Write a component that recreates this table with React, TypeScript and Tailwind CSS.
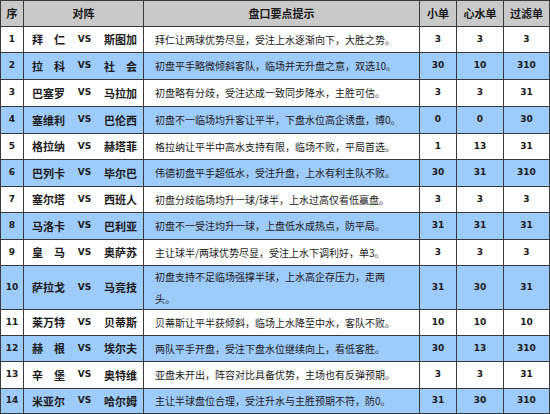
// Match tips table
type Row = {
  no: number;
  home: string;
  away: string;
  tip: string;
  small: string;
  heart: string;
  filter: string;
};

const rows: Row[] = [
  { no: 1, home: "拜　仁", away: "斯图加", tip: "拜仁让两球优势尽显，受注上水逐渐向下，大胜之势。", small: "3", heart: "3", filter: "3" },
  { no: 2, home: "拉　科", away: "社　会", tip: "初盘平手略微倾斜客队，临场并无升盘之意，双选10。", small: "30", heart: "10", filter: "310" },
  { no: 3, home: "巴塞罗", away: "马拉加", tip: "初盘略有分歧，受注达成一致同步降水，主胜可信。", small: "3", heart: "3", filter: "31" },
  { no: 4, home: "塞维利", away: "巴伦西", tip: "初盘不一临场均升客让平半，下盘水位高企诱盘，博0。", small: "0", heart: "0", filter: "30" },
  { no: 5, home: "格拉纳", away: "赫塔菲", tip: "格拉纳让平半中高水支持有限，临场不败，平局首选。", small: "1", heart: "13", filter: "31" },
  { no: 6, home: "巴列卡", away: "毕尔巴", tip: "伟德初盘平手超低水，受注升盘，上水有利主队不败。", small: "30", heart: "31", filter: "310" },
  { no: 7, home: "塞尔塔", away: "西班人", tip: "初盘分歧临场均升一球/球半，上水过高仅看低赢盘。", small: "3", heart: "3", filter: "3" },
  { no: 8, home: "马洛卡", away: "巴利亚", tip: "初盘不一受注均升一球，上盘低水成热点，防平局。", small: "31", heart: "31", filter: "31" },
  { no: 9, home: "皇　马", away: "奥萨苏", tip: "主让球半/两球优势尽显，受注上水下调利好，单3。", small: "3", heart: "3", filter: "3" },
  { no: 10, home: "萨拉戈", away: "马竞技", tip: "初盘支持不足临场强撑半球，上水高企存压力，走两\n头。", small: "31", heart: "30", filter: "31" },
  { no: 11, home: "莱万特", away: "贝蒂斯", tip: "贝蒂斯让平半获倾斜，临场上水降至中水，客队不败。", small: "10", heart: "10", filter: "10" },
  { no: 12, home: "赫　根", away: "埃尔夫", tip: "两队平手开盘，受注下盘水位继续向上，看低客胜。", small: "30", heart: "13", filter: "310" },
  { no: 13, home: "辛　堡", away: "奥特维", tip: "亚盘未开出，阵容对比具备优势，主场也有反弹预期。", small: "3", heart: "3", filter: "31" },
  { no: 14, home: "米亚尔", away: "哈尔姆", tip: "主让半球盘位合理，受注升水与主胜预期不符，防0。", small: "31", heart: "30", filter: "310" },
];

const cjk = "font-['Noto_Sans_CJK_SC',sans-serif]";
const num = "font-['DejaVu_Sans','Noto_Sans_CJK_SC',sans-serif] font-bold text-[9px]";

export default function App() {
  return (
    <div className="w-[550px] h-[414px] bg-[#3a3a3a] p-px text-[#1a1a1a]">
      <div className="grid h-full grid-cols-[22px_119px_275px_36px_46px_45px] grid-rows-[25px_25px_26px_26px_26px_25px_26px_25px_26px_25px_43px_25px_25px_26px_24px] gap-px">
        {/* header */}
        <div className={`bg-[#c9c9c9] flex items-center justify-center font-bold text-[11px] ${cjk}`}>序</div>
        <div className={`bg-[#c9c9c9] flex items-center justify-center font-bold text-[11px] ${cjk}`}>对阵</div>
        <div className={`bg-[#c9c9c9] flex items-center justify-center font-bold text-[11px] ${cjk}`}>盘口要点提示</div>
        <div className={`bg-[#c9c9c9] flex items-center justify-center font-bold text-[11px] ${cjk}`}>小单</div>
        <div className={`bg-[#c9c9c9] flex items-center justify-center font-bold text-[11px] ${cjk}`}>心水单</div>
        <div className={`bg-[#c9c9c9] flex items-center justify-center font-bold text-[11px] ${cjk}`}>过滤单</div>

        {rows.map((r) => {
          const bg = r.no % 2 === 0 ? "bg-[#9dcbfa]" : "bg-white";
          return (
            <div key={r.no} className="contents">
              <div className={`${bg} flex items-center justify-center ${num}`}>{r.no}</div>
              <div className={`${bg} flex items-center justify-between pl-[8px] pr-[6px] font-bold text-[11px] ${cjk}`}>
                <span>{r.home}</span>
                <span className="font-['DejaVu_Sans',sans-serif] text-[9px]">VS</span>
                <span>{r.away}</span>
              </div>
              <div className={`${bg} flex items-center pl-[11px] text-[10px] leading-[22px] whitespace-pre-line ${cjk}`}>{r.tip}</div>
              <div className={`${bg} flex items-center justify-center ${num}`}>{r.small}</div>
              <div className={`${bg} flex items-center justify-center ${num}`}>{r.heart}</div>
              <div className={`${bg} flex items-center justify-center ${num}`}>{r.filter}</div>
            </div>
          );
        })}
      </div>
    </div>
  );
}
